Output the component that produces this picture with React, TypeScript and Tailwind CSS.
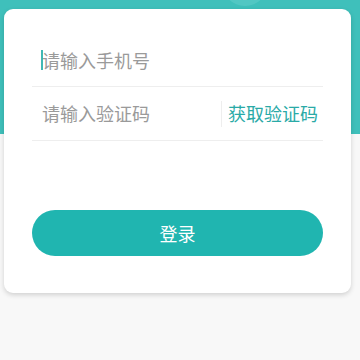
import { useState } from 'react'

export default function App() {
  const [phone, setPhone] = useState('')
  const [code, setCode] = useState('')

  return (
    <div
      className="relative h-[360px] w-full overflow-hidden bg-[linear-gradient(to_bottom,#3fc0bb_134px,#f8f8f8_134px)] px-[4px] pt-[9px]"
      style={{ fontFamily: '"Noto Sans CJK SC", "Noto Sans", sans-serif' }}
    >
      {/* faint decorative bubble in the header */}
      <div className="absolute left-[222px] top-[-40px] h-[46px] w-[46px] rounded-full bg-[#6fd3cf] opacity-40" />

      <div className="relative flex h-[284px] w-[347px] flex-col rounded-[9px] bg-white px-[28px] pt-[25px] shadow-[0_2px_5px_rgba(0,0,0,0.16)]">
        <div className="flex h-[53px] items-center border-b border-[#eeeeee] pl-[9px]">
          <span className="-mr-[1px] h-[20px] w-[2px] bg-[#3fb8b4]" />
          <input
            value={phone}
            onChange={(e) => setPhone(e.target.value)}
            placeholder="请输入手机号"
            className="w-full bg-transparent text-[18px] text-[#333] outline-none placeholder:text-[#9a9a9a]"
          />
        </div>

        <div className="flex h-[54px] items-center border-b border-[#eeeeee] pl-[10px]">
          <input
            value={code}
            onChange={(e) => setCode(e.target.value)}
            placeholder="请输入验证码"
            className="min-w-0 flex-1 bg-transparent text-[18px] text-[#333] outline-none placeholder:text-[#9a9a9a]"
          />
          <span className="h-[26px] w-px bg-[#eeeeee]" />
          <button type="button" className="pl-[6px] pr-[5px] text-[18px] text-[#2aaaa7]">
            获取验证码
          </button>
        </div>

        <button
          type="button"
          className="mt-[69px] flex h-[46px] w-full items-center justify-center rounded-full bg-[#20b5b0] text-[18px] text-white"
        >
          登录
        </button>
      </div>
    </div>
  )
}
